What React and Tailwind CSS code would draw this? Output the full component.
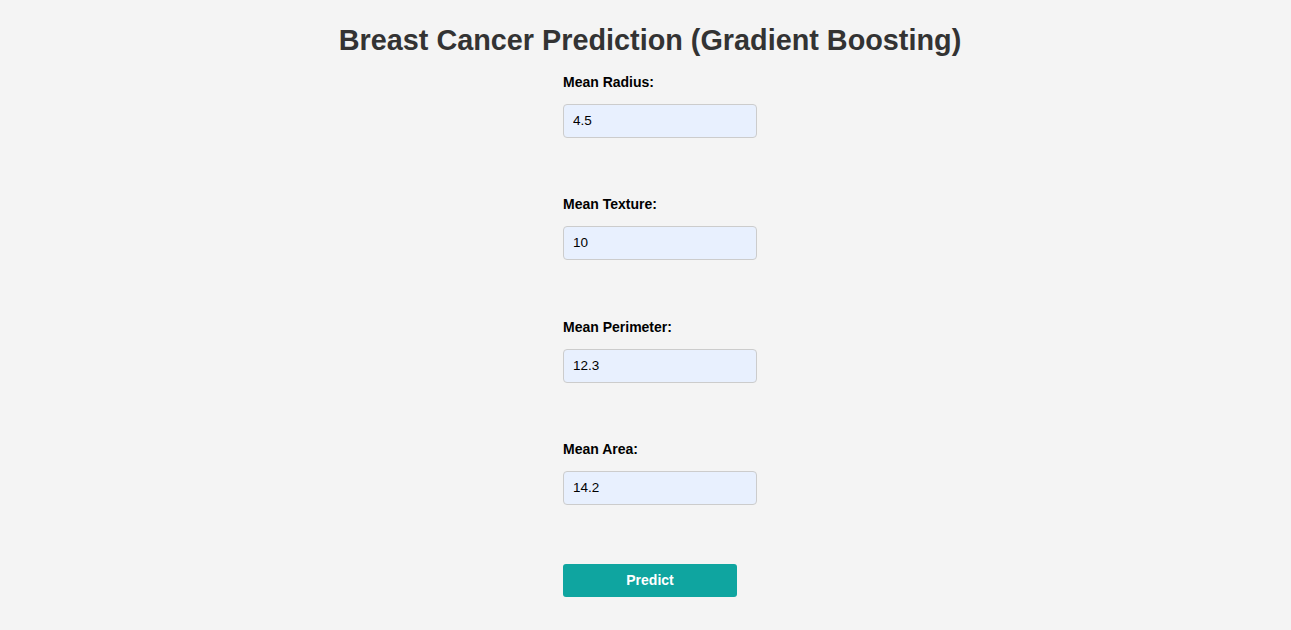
import { useState } from 'react';

const fields = [
  { id: 'radius', label: 'Mean Radius:', value: '4.5' },
  { id: 'texture', label: 'Mean Texture:', value: '10' },
  { id: 'perimeter', label: 'Mean Perimeter:', value: '12.3' },
  { id: 'area', label: 'Mean Area:', value: '14.2' },
];

export default function App() {
  const [values, setValues] = useState(
    Object.fromEntries(fields.map((f) => [f.id, f.value]))
  );

  return (
    <div className="min-h-[630px] w-full bg-[#f4f4f4] font-['Liberation_Sans',Arial,sans-serif] pt-[23.5px]">
      <h1 className="pl-[9px] text-center text-[28.8px] leading-[33px] font-bold text-[#333333]">
        Breast Cancer Prediction (Gradient Boosting)
      </h1>

      <form
        className="ml-[563px] mt-[17px] flex flex-col"
        onSubmit={(e) => e.preventDefault()}
      >
        {fields.map((f) => (
          <div key={f.id} className="flex flex-col gap-[14px] mb-[58.5px]">
            <label htmlFor={f.id} className="text-[14px] leading-[16px] font-bold text-black">
              {f.label}
            </label>
            <input
              id={f.id}
              type="text"
              value={values[f.id]}
              onChange={(e) => setValues((p) => ({ ...p, [f.id]: e.target.value }))}
              className="w-[194px] h-[34px] px-[9px] pb-[1px] text-[13.5px] leading-[16px] text-black bg-[#e8f0fe] border border-[#cccccc] rounded-[4px] outline-none"
            />
          </div>
        ))}

        <button
          type="submit"
          className="w-[174px] h-[33px] bg-[#0fa5a0] text-white text-[14px] font-bold rounded-[3px]"
        >
          Predict
        </button>
      </form>
    </div>
  );
}
